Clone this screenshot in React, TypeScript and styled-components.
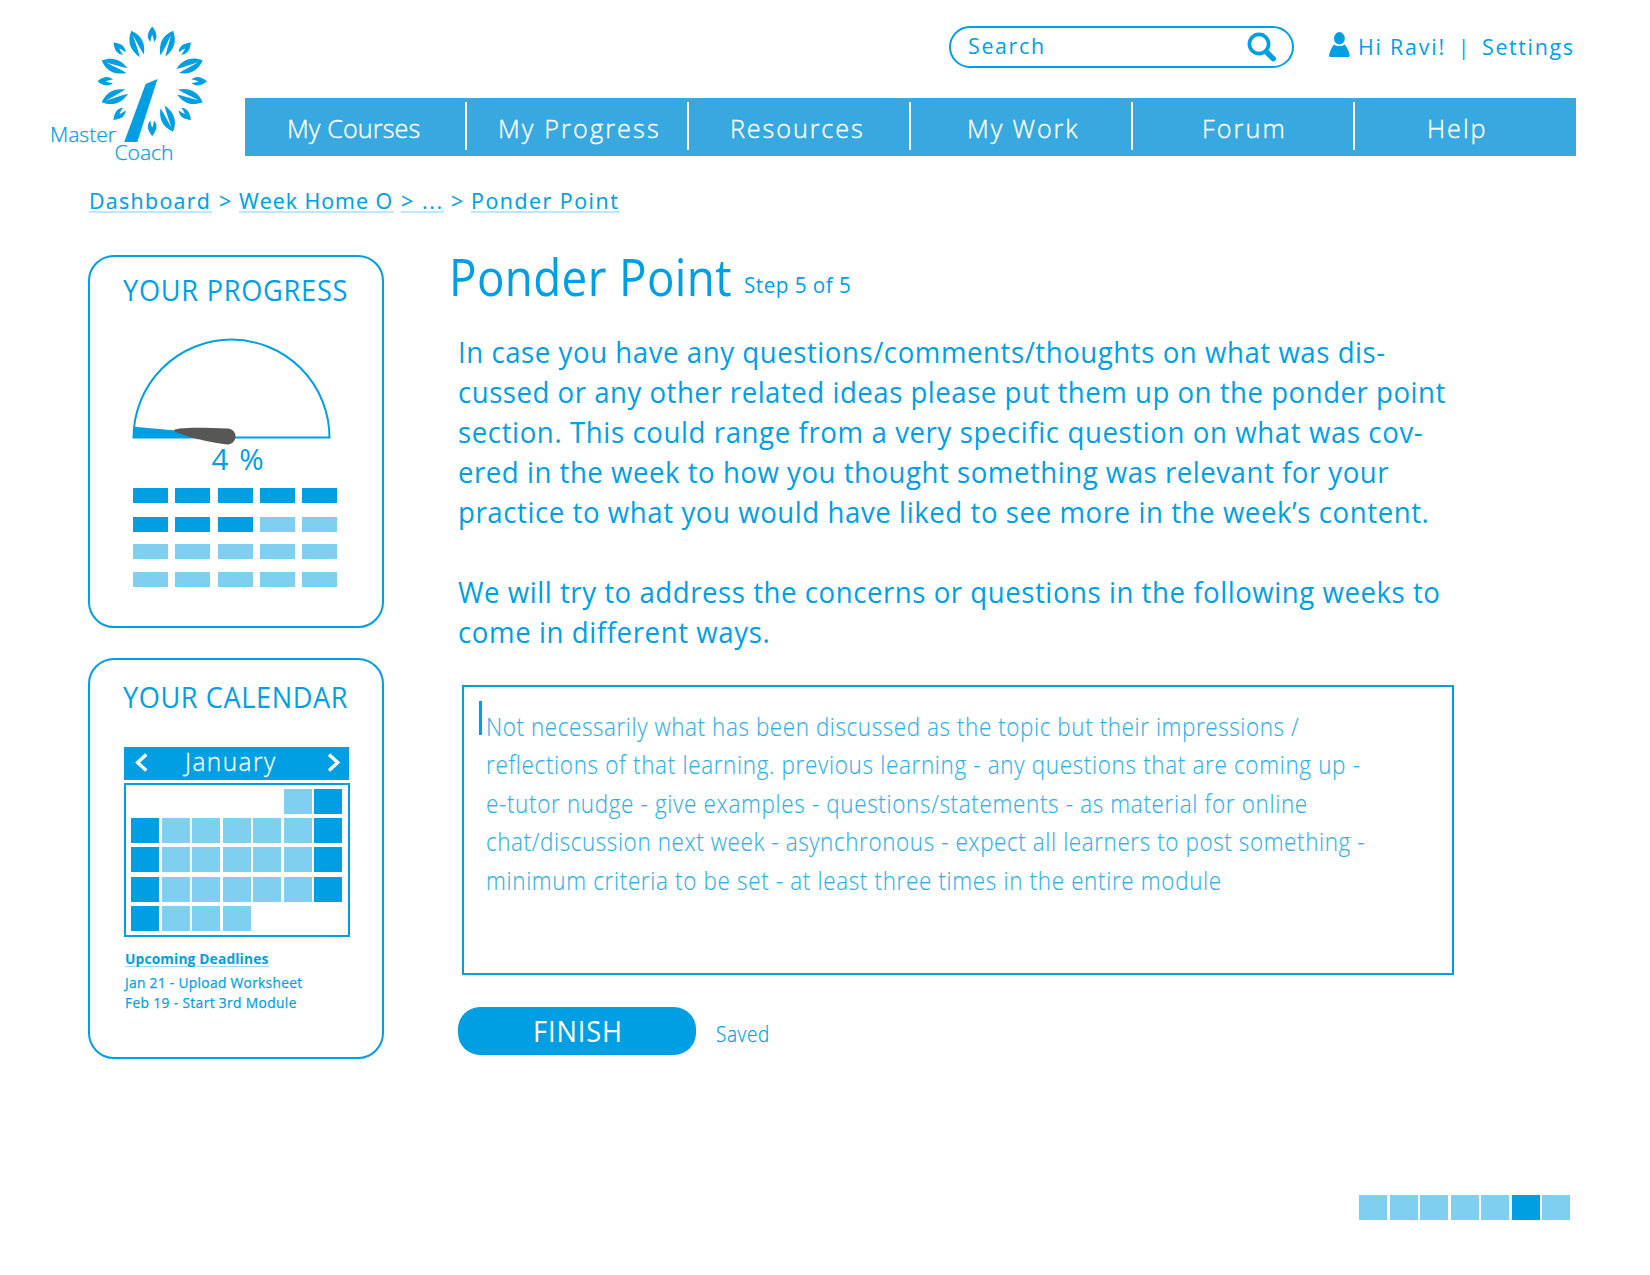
import React from "react";
import styled, { createGlobalStyle } from "styled-components";

const BLUE = "#009fe3";
const PALE = "#7fcff1";
const BAR = "#37a8e0";

const GlobalStyle = createGlobalStyle`
  * { box-sizing: border-box; }
  body { margin: 0; background: #fff; }
`;

const Page = styled.div`
  width: 1650px;
  height: 1275px;
  overflow: hidden;
  background: #fff;
  color: ${BLUE};
  font-family: "Open Sans", "Noto Sans", sans-serif;
`;

/* Narrow humanist lettering: the face is squeezed horizontally and tracked out. */
const Type = styled.span<{
  $size: number;
  $line: number;
  $narrow: number;
  $track: number;
  $weight?: number;
  $bolder?: number;
}>`
  display: block;
  margin: 0;
  font-size: ${(p) => p.$size}px;
  line-height: ${(p) => p.$line}px;
  font-weight: ${(p) => p.$weight ?? 400};
  letter-spacing: ${(p) => p.$track}px;
  -webkit-text-stroke: ${(p) => p.$bolder ?? 0}px currentColor;
  white-space: nowrap;
  transform: scaleX(${(p) => p.$narrow});
  transform-origin: 0 50%;
`;

/* ---------- header ---------- */

const Header = styled.header`
  display: grid;
  grid-template-columns: 245px 1331px;
  height: 165px;
`;

const HeaderMain = styled.div`
  display: flex;
  flex-direction: column;
`;

const TopRow = styled.div`
  display: flex;
  height: 98px;
  padding: 26px 0 0 704px;
`;

const SearchBox = styled.div`
  display: flex;
  flex: none;
  justify-content: space-between;
  width: 345px;
  height: 42px;
  padding: 3px 16px 0 17px;
  border: 2px solid ${BLUE};
  border-radius: 21px;
`;

const SearchLabel = styled.div`
  width: 120px;
`;

const SearchIcon = styled.svg`
  display: block;
  margin-top: 1px;
`;

const UserBar = styled.div`
  display: grid;
  flex: none;
  grid-template-columns: 28.5px 100px 24.5px 94px;
  margin: 6px 0 0 35px;
`;

const UserIcon = styled.svg`
  display: block;
`;

const Nav = styled.nav`
  display: grid;
  grid-template-columns: 220px repeat(5, 222px);
  height: 58px;
  background: ${BAR};
  color: #fff;
`;

const NavItem = styled.div<{ $indent: number; $divided: boolean }>`
  display: flex;
  align-items: flex-start;
  padding-top: 4px;
  gap: ${(p) => p.$indent - (p.$divided ? 2 : 0)}px;

  &::before {
    content: "";
    flex: none;
    width: ${(p) => (p.$divided ? 2 : 0)}px;
    height: 48px;
    background: #fff;
  }
`;

const NAV = [
  { label: "My Courses", indent: 42, track: 0.13 },
  { label: "My Progress", indent: 32.9, track: 2.25 },
  { label: "Resources", indent: 43, track: 2.0 },
  { label: "My Work", indent: 58.4, track: 2.0 },
  { label: "Forum", indent: 71, track: 2.2 },
  { label: "Help", indent: 74, track: 2.1 },
];

const LARGE_LEAF =
  "M0 -54.6C-8.6 -46 -8.2 -36 -2.2 -27C-.9 -35 -.8 -42 -.3 -50C.9 -42 1.4 -35 2.6 -28C8.2 -37 8 -46 0 -54.6Z";
const SMALL_LEAF =
  "M0 -54.8C-5.6 -48 -5.2 -43 -1.8 -39.2C-1.5 -42 -1 -44 0 -46.5C1 -44 1.5 -42 1.8 -39.2C5.2 -43 5.6 -48 0 -54.8Z";

function Logo() {
  return (
    <svg width="245" height="165" viewBox="0 0 245 165" fill={BLUE}>
      <g transform="translate(152.2 81.3)">
        {Array.from({ length: 16 }, (_, i) => i)
          .filter((i) => i !== 9)
          .map((i) => (
            <path key={i} d={i % 2 ? LARGE_LEAF : SMALL_LEAF} transform={`rotate(${i * 22.5})`} />
          ))}
      </g>
      <path d="M145.6 84L157.5 79L137.3 142H124.2Z" />
      <g fontSize="19.6" fontWeight="300" stroke={BLUE} strokeWidth="0.25">
        <text x="50" y="142" textLength="66" lengthAdjust="spacingAndGlyphs">Master</text>
        <text x="114.5" y="160" textLength="59" lengthAdjust="spacingAndGlyphs">Coach</text>
      </g>
    </svg>
  );
}

/* ---------- breadcrumbs ---------- */

const Crumbs = styled.div`
  display: flex;
  height: 49px;
  padding: 25px 0 0 89px;
`;

const Crumb = styled.a<{ $width: number; $before?: number }>`
  width: ${(p) => p.$width}px;
  height: 23px;
  margin-left: ${(p) => p.$before ?? 0}px;
  border-bottom: 2px solid #bfe7f8;
`;

const CrumbGap = styled.span`
  width: 27px;
  padding-left: 6.5px;
`;

function CrumbText({ track, children }: { track: number; children: React.ReactNode }) {
  return (
    <Type $size={22.5} $line={22} $narrow={0.95} $track={track} $bolder={0.15}>
      {children}
    </Type>
  );
}

/* ---------- body ---------- */

const Body = styled.div`
  display: grid;
  grid-template-columns: 296px 1fr;
  column-gap: 64.5px;
  height: 846px;
  padding-left: 88px;
`;

const Aside = styled.aside`
  display: flex;
  flex-direction: column;
  gap: 30px;
  padding-top: 41px;
`;

const Card = styled.section<{ $height: number; $top: number }>`
  height: ${(p) => p.$height}px;
  padding: ${(p) => p.$top}px 0 0 33px;
  border: 2px solid ${BLUE};
  border-radius: 26px;
`;

const Gauge = styled.svg`
  display: block;
  margin: 28px 0 0 7px;
  overflow: visible;
`;

const Percent = styled.div`
  padding-left: 88.5px;
`;

const Bars = styled.div`
  display: grid;
  grid-template-columns: repeat(5, 35px);
  grid-template-rows: 29px 27.3px 28px 15px;
  column-gap: 7.3px;
  margin: 14px 0 0 10px;
`;

const Bar = styled.div<{ $done: boolean }>`
  height: 15px;
  background: ${(p) => (p.$done ? BLUE : PALE)};
`;

const MonthBar = styled.div`
  display: flex;
  width: 225px;
  height: 33px;
  margin: 32px 0 0 1px;
  padding-left: 11px;
  background: ${BLUE};
  color: #fff;
`;

const MonthName = styled.div`
  width: 143.5px;
  margin-left: 36.5px;
`;

const Chevron = styled.svg`
  display: block;
  margin-top: 6px;
`;

const Days = styled.div`
  display: grid;
  grid-template-columns: repeat(7, 28px);
  grid-template-rows: repeat(5, 25px);
  gap: 4.1px 2.5px;
  width: 226px;
  height: 154px;
  margin: 3px 0 0 0.5px;
  padding: 4.3px 0 0 5.7px;
  border: 2px solid ${BLUE};
`;

const Day = styled.div<{ $tone: string }>`
  width: 28px;
  height: 25px;
  background: ${(p) => (p.$tone === "w" ? BLUE : p.$tone === "d" ? PALE : "transparent")};
`;

const Deadlines = styled.div`
  padding: 14px 0 0 1.5px;
`;

const DeadlineTitle = styled.div`
  width: 144px;
  margin-bottom: 5px;
  border-bottom: 1px solid #9fdaf4;
`;

const MONTH = [".....dw", "wdddddw", "wdddddw", "wdddddw", "wddd..."].join("").split("");

const Main = styled.main`
  padding-top: 32px;
`;

const Heading = styled.div`
  display: grid;
  grid-template-columns: 295.5px 120px;
  height: 60px;
`;

const StepText = styled.div`
  padding-top: 24px;
`;

const Copy = styled.div`
  width: 1000px;
  margin: 26px 0 32.5px 9.7px;
`;

const Paragraph = styled.div`
  & + & {
    margin-top: 40px;
  }
`;

const Editor = styled.div`
  position: relative;
  width: 992px;
  height: 290px;
  margin-left: 13.5px;
  padding: 20px 0 0 22px;
  border: 2px solid ${BLUE};
  color: #2fafe8;
`;

const Caret = styled.span`
  position: absolute;
  left: 15px;
  top: 14px;
  width: 3px;
  height: 34px;
  background: ${BLUE};
`;

const Actions = styled.div`
  display: flex;
  gap: 20px;
  margin: 32px 0 0 9.5px;
`;

const FinishButton = styled.button`
  width: 238px;
  height: 48px;
  padding: 0 0 0 75px;
  border: 0;
  border-radius: 22px;
  background: ${BLUE};
  color: #fff;
  font-family: inherit;
  text-align: left;
`;

const Pager = styled.footer`
  display: flex;
  justify-content: flex-end;
  gap: 2.5px;
  padding: 134.6px 79.6px 0 0;
`;

const COPY = [
  [
    { text: "In case you have any questions/comments/thoughts on what was dis-", track: 0.6 },
    { text: "cussed or any other related ideas please put them up on the ponder point", track: 0.555 },
    { text: "section. This could range from a very specific question on what was cov-", track: 0.65 },
    { text: "ered in the week to how you thought something was relevant for your", track: 0.565 },
    { text: "practice to what you would have liked to see more in the week’s content.", track: 0.62 },
  ],
  [
    { text: "We will try to address the concerns or questions in the following weeks to", track: 0.59 },
    { text: "come in different ways.", track: 0.64 },
  ],
];

const PROMPT = [
  { text: "Not necessarily what has been discussed as the topic but their impressions /", track: 0.67 },
  { text: "reflections of that learning. previous learning - any questions that are coming up -", track: 0.77 },
  { text: "e-tutor nudge - give examples - questions/statements - as material for online", track: 0.765 },
  { text: "chat/discussion next week - asynchronous - expect all learners to post something -", track: 0.69 },
  { text: "minimum criteria to be set - at least three times in the entire module", track: 0.755 },
];

export default function App() {
  return (
    <Page>
      <GlobalStyle />
      <Header>
        <Logo />
        <HeaderMain>
          <TopRow>
            <SearchBox>
              <SearchLabel>
                <Type $size={22.5} $line={30} $narrow={0.95} $track={1.75}>Search</Type>
              </SearchLabel>
              <SearchIcon width="29" height="30" viewBox="0 0 29 30">
                <path d="M19 19.5L26.2 26.7" stroke={BLUE} strokeWidth="5.4" strokeLinecap="round" />
                <circle cx="12" cy="12" r="9.6" fill="#fff" stroke={BLUE} strokeWidth="3.7" />
              </SearchIcon>
            </SearchBox>
            <UserBar>
              <UserIcon width="21" height="26" viewBox="0 0 21 26" fill={BLUE}>
                <ellipse cx="10.4" cy="6.3" rx="5.4" ry="6.2" />
                <path d="M5 12.4C8 14.6 12.8 14.6 15.8 12.4C17.6 14.6 20.2 19.5 20.6 23C20.7 24.4 20.2 25 19 25H1.8C.6 25 .1 24.4 .2 23C.6 19.5 3.2 14.6 5 12.4Z" />
              </UserIcon>
              <Type $size={22.5} $line={30} $narrow={0.95} $track={1.9}>Hi Ravi!</Type>
              <Type $size={22.5} $line={30} $narrow={0.9} $track={0}>|</Type>
              <Type $size={22.5} $line={30} $narrow={0.95} $track={1.75}>Settings</Type>
            </UserBar>
          </TopRow>
          <Nav>
            {NAV.map((item, i) => (
              <NavItem key={item.label} $indent={item.indent} $divided={i > 0}>
                <Type $size={26.5} $line={52} $narrow={0.95} $track={item.track} $weight={300} $bolder={0.4}>
                  {item.label}
                </Type>
              </NavItem>
            ))}
          </Nav>
        </HeaderMain>
      </Header>

      <Crumbs>
        <Crumb $width={123}><CrumbText track={1.4}>Dashboard</CrumbText></Crumb>
        <CrumbGap><CrumbText track={0}>&gt;</CrumbText></CrumbGap>
        <Crumb $width={155}><CrumbText track={1.05}>Week Home O</CrumbText></Crumb>
        <Crumb $width={43} $before={7}><CrumbText track={1.7}>&gt; ...</CrumbText></Crumb>
        <CrumbGap><CrumbText track={0}>&gt;</CrumbText></CrumbGap>
        <Crumb $width={149}><CrumbText track={1.6}>Ponder Point</CrumbText></Crumb>
      </Crumbs>

      <Body>
        <Aside>
          <Card $height={373} $top={15}>
            <Type $size={29.5} $line={36} $narrow={0.92} $track={0.82}>YOUR PROGRESS</Type>
            <Gauge width="204" height="107" viewBox="130 336 204 107">
              <path d="M133.5 437.6A98 98 0 0 1 329.5 437.6Z" fill="none" stroke={BLUE} strokeWidth="2" />
              <path d="M133.5 437.6L134.4 426.8L176 430.6L205 437.6Z" fill={BLUE} />
              <path d="M174 431C173 428.4 184 427.6 204 427.8L228 428.4A8 8 0 1 1 227 444.4C210 443 182 435.6 174 431Z" fill="#575756" />
            </Gauge>
            <Percent>
              <Type $size={29.5} $line={31} $narrow={1} $track={1.6}>4 %</Type>
            </Percent>
            <Bars>
              {Array.from({ length: 20 }, (_, i) => (
                <Bar key={i} $done={i < 8} />
              ))}
            </Bars>
          </Card>

          <Card $height={401} $top={18}>
            <Type $size={29.5} $line={37} $narrow={0.92} $track={0.65}>YOUR CALENDAR</Type>
            <MonthBar>
              <Chevron width="13" height="20" viewBox="0 0 13 20" fill="none" stroke="#fff" strokeWidth="3.4">
                <path d="M11.3 1.6L2.6 9.6L11.3 17.6" />
              </Chevron>
              <MonthName>
                <Type $size={26.5} $line={28} $narrow={0.92} $track={1.6} $weight={300} $bolder={0.3}>January</Type>
              </MonthName>
              <Chevron width="13" height="20" viewBox="0 0 13 20" fill="none" stroke="#fff" strokeWidth="3.4">
                <path d="M1 1.6L9.7 9.6L1 17.6" />
              </Chevron>
            </MonthBar>
            <Days>
              {MONTH.map((tone, i) => (
                <Day key={i} $tone={tone} />
              ))}
            </Days>
            <Deadlines>
              <DeadlineTitle>
                <Type $size={15} $line={15} $narrow={0.92} $track={0.15} $weight={700}>Upcoming Deadlines</Type>
              </DeadlineTitle>
              <Type $size={15} $line={20} $narrow={0.92} $track={0.32} $bolder={0.25}>Jan 21 - Upload Worksheet</Type>
              <Type $size={15} $line={20} $narrow={0.92} $track={0.38} $bolder={0.25}>Feb 19 - Start 3rd Module</Type>
            </Deadlines>
          </Card>
        </Aside>

        <Main>
          <Heading>
            <Type as="h1" $size={52} $line={60} $narrow={0.88} $track={0.42}>Ponder Point</Type>
            <StepText>
              <Type $size={22.5} $line={30} $narrow={0.92} $track={0.5}>Step 5 of 5</Type>
            </StepText>
          </Heading>
          <Copy>
            {COPY.map((lines, i) => (
              <Paragraph key={i}>
                {lines.map((line) => (
                  <Type key={line.text} $size={30} $line={40} $narrow={0.92} $track={line.track}>{line.text}</Type>
                ))}
              </Paragraph>
            ))}
          </Copy>
          <Editor>
            <Caret />
            {PROMPT.map((line) => (
              <Type key={line.text} $size={25.5} $line={38.6} $narrow={0.88} $track={line.track} $weight={300} $bolder={0.15}>
                {line.text}
              </Type>
            ))}
          </Editor>
          <Actions>
            <FinishButton>
              <Type $size={29.5} $line={48} $narrow={0.92} $track={1.0}>FINISH</Type>
            </FinishButton>
            <Type $size={21.5} $line={54} $narrow={0.88} $track={0.7} $weight={300} $bolder={0.25}>Saved</Type>
          </Actions>
        </Main>
      </Body>

      <Pager>
        {Array.from({ length: 7 }, (_, i) => (
          <Day key={i} $tone={i === 5 ? "w" : "d"} />
        ))}
      </Pager>
    </Page>
  );
}
